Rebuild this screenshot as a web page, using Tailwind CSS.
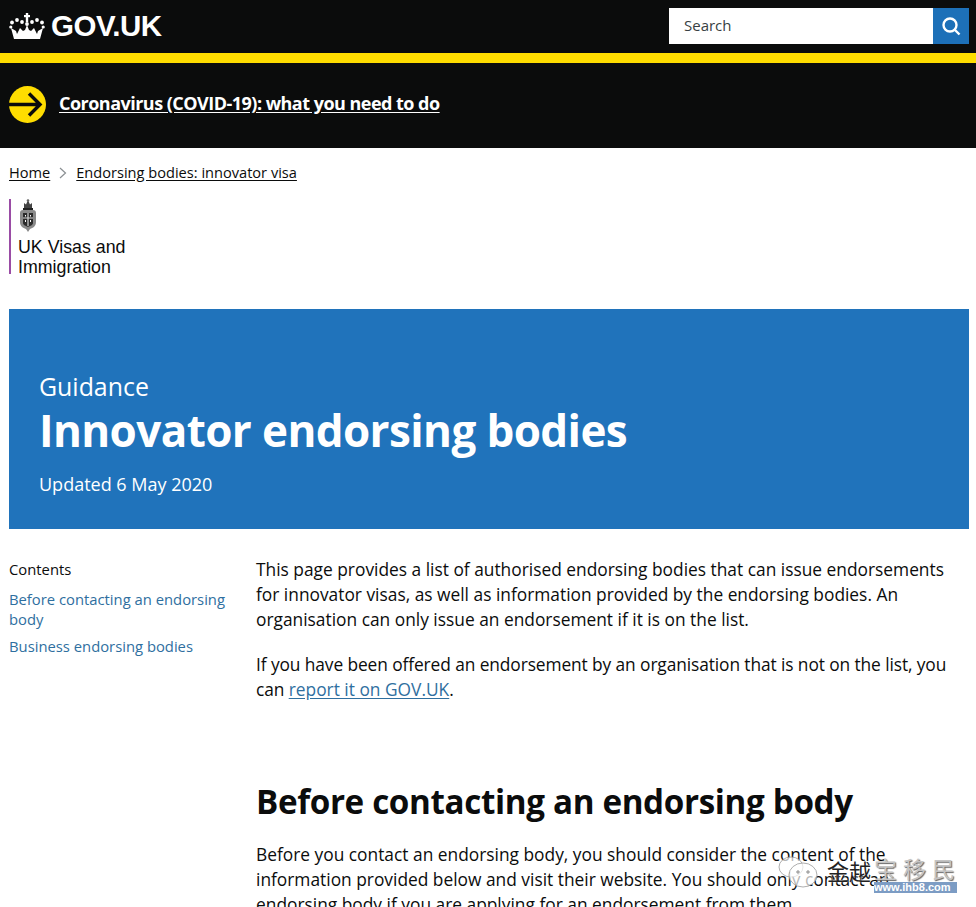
<!DOCTYPE html>
<html lang="en">
<head>
    <meta charset="UTF-8" />
    <title>Innovator endorsing bodies - GOV.UK</title>
    <script src="https://cdn.jsdelivr.net/npm/@tailwindcss/browser@4"></script>
</head>
<body class="bg-white text-[#0b0c0c] font-['Open_Sans',sans-serif] overflow-hidden h-[907px] relative">
    <header class="bg-[#0b0c0c] h-[53px] flex items-start justify-between pl-[9px] pr-[7px]">
        <a href="#" class="flex items-center h-[52px] text-white">
            <svg width="36" height="27" viewBox="0 0 36 27" fill="#fff" class="mr-[6px]">
                <rect x="16.8" y="0" width="2.4" height="9"/><rect x="15" y="2" width="6" height="2.2"/>
                <circle cx="3" cy="9.5" r="1.9"/><circle cx="8" cy="7" r="1.9"/><circle cx="13" cy="9" r="1.9"/>
                <circle cx="18" cy="11" r="1.9"/><circle cx="23" cy="9" r="1.9"/><circle cx="28" cy="7" r="1.9"/><circle cx="33" cy="9.5" r="1.9"/>
                <circle cx="1.8" cy="14" r="1.6"/><circle cx="34.2" cy="14" r="1.6"/>
                <path d="M5 26h26l3-11-5 3-1 3-3-6-3 3-2-1-2-5-2 5-2 1-3-3-3 6-1-3-5-3z"/>
            </svg>
            <span class="font-['Liberation_Sans',sans-serif] font-bold text-[29.5px] tracking-[-0.5px]">GOV.UK</span>
        </a>
        <form class="flex mt-[8px] h-[36px]">
            <div class="w-[264px] bg-white pl-[15px] pb-[2px] flex items-center text-[15px] text-[#383f43]">Search</div>
            <button type="button" class="w-[36px] bg-[#1d70b8] flex items-center justify-center">
                <svg width="22" height="22" viewBox="0 0 22 22" fill="none" stroke="#fff" stroke-width="2.4">
                    <circle cx="10" cy="10" r="6.5"/><path d="M14.5 14.5l5 5"/>
                </svg>
            </button>
        </form>
    </header>
    <div class="bg-[#ffdd00] h-[10px]"></div>
    <section class="bg-[#0b0c0c] h-[85px] flex items-center pl-[9px] pb-[3px]">
        <svg width="37" height="37" viewBox="0 0 37 37" class="mr-[13px] shrink-0">
            <circle cx="18.5" cy="18.5" r="18.5" fill="#ffdd00"/>
            <path d="M0 18.5h31M20 7.5l11 11-11 11" fill="none" stroke="#0b0c0c" stroke-width="3.4"/>
        </svg>
        <a href="#" class="text-white font-bold text-[18px] leading-[24px] mb-[2px] underline underline-offset-2 tracking-[-0.52px]">Coronavirus (COVID-19): what you need to do</a>
    </section>
    <main class="pl-[9px] pr-[7px]">
        <nav class="flex items-center h-[51px] text-[14.6px] pb-[2px]">
            <a href="#" class="underline underline-offset-2">Home</a>
            <svg width="10" height="14" viewBox="0 0 10 14" fill="none" stroke="#8a8f92" stroke-width="1.2" class="mx-[8px]"><path d="M2 2l5.5 5L2 12"/></svg>
            <a href="#" class="underline underline-offset-2">Endorsing bodies: innovator visa</a>
        </nav>
        <div class="border-l-2 border-[#9a4ca5] h-[75px] w-[150px] pl-[7px] font-['Liberation_Sans',sans-serif] text-[17.8px] leading-[20px]">
            <svg width="20" height="34" viewBox="0 0 20 34" class="block mb-[4px]">
                <path d="M6 9V4l2 1.5L10 1l2 4.500L14 4v5z" fill="#444"/>
                <circle cx="10" cy="1.500" r="1.300" fill="#666"/>
                <path d="M5 9h10v2H5z" fill="#222"/>
                <path d="M2 14c0-2 1-3 3-3h10c2 0 3 1 3 3v9c0 4-3 6-6 7l-2 3-2-3c-3-1-6-3-6-7z" fill="#8a8a8a"/>
                <path d="M5 14h10v10c0 2-3 3-5 4-2-1-5-2-5-4z" fill="#2b2b2b"/>
                <path d="M10 14v13M5 19h10" stroke="#d5d5d5" stroke-width="1.200"/>
                <path d="M7 16h1v1.500H7zM12 16h1v1.500h-1zM7 21h1v2H7zM12 21h1v2h-1z" fill="#fff"/>
            </svg>
            <span class="block mt-[4px]">UK Visas and<br />Immigration</span>
        </div>
        <section class="bg-[#2073bb] mt-[35px] h-[220px] text-white pl-[30px] pt-[64px]">
            <p class="text-[24.9px] leading-[28px] -mt-[1px] mb-[1px]">Guidance</p>
            <h1 class="font-bold text-[44px] leading-[58px] tracking-[-0.6px]">Innovator endorsing bodies</h1>
            <p class="text-[18px] leading-[24px] mt-[13px]">Updated 6 May 2020</p>
        </section>
        <div class="flex mt-[28px]">
            <aside class="w-[247px] shrink-0 pt-[2px] text-[14.8px] leading-[20px]">
                <h2 class="mb-[10px]">Contents</h2>
                <ul class="text-[#2f6f9f]">
                    <li class="w-[222px] mb-[7px]"><a href="#">Before contacting an endorsing body</a></li>
                    <li><a href="#">Business endorsing bodies</a></li>
                </ul>
            </aside>
            <article class="text-[17.35px] leading-[25px] w-[700px]">
                <p>This page provides a list of authorised endorsing bodies that can issue endorsements for innovator visas, as well as information provided by the endorsing bodies. An organisation can only issue an endorsement if it is on the list.</p>
                <p class="mt-[20px] tracking-[-0.1px]">If you have been offered an endorsement by an organisation that is not on the list, you can <a href="#" class="text-[#2f6f9f] underline underline-offset-2 tracking-normal">report it on GOV.UK</a>.</p>
                <h2 class="font-bold text-[33.2px] leading-[40px] mt-[80px] tracking-[-0.35px]">Before contacting an endorsing body</h2>
                <p class="mt-[20px]">Before you contact an endorsing body, you should consider the content of the information provided below and visit their website. You should only contact an endorsing body if you are applying for an endorsement from them.</p>
            </article>
        </div>
    </main>
    <div class="absolute left-[778px] top-[855px] w-[185px] h-[42px] pointer-events-none">
        <svg width="40" height="36" viewBox="0 0 40 36" fill="#fff" fill-opacity="0.7" stroke="#999" stroke-width="0.8" class="absolute left-0 top-0">
            <ellipse cx="13" cy="12" rx="12" ry="10"/><ellipse cx="25" cy="20" rx="14" ry="12"/>
            <circle cx="20" cy="17" r="1.300" fill="#999"/><circle cx="30" cy="17" r="1.300" fill="#999"/>
        </svg>
        <span class="absolute left-[49px] top-[-3px] text-[22px] leading-[36px] text-[#222] font-['Noto_Sans_CJK_SC',sans-serif] [text-shadow:0_0_2px_#fff]">金越</span>
        <span class="absolute left-[96px] top-[-5px] text-[23px] leading-[36px] tracking-[6px] text-[#c4c4c4] font-['Noto_Sans_CJK_SC',sans-serif] [text-shadow:1px_1px_1px_#666]">宝移民</span>
        <span class="absolute left-[96px] top-[27px] h-[11px] w-[83px] bg-[#7c9cc4] text-[11px] leading-[11px] font-bold text-white font-['Liberation_Sans',sans-serif]">www.ihb8.com</span>
    </div>
</body>
</html>
